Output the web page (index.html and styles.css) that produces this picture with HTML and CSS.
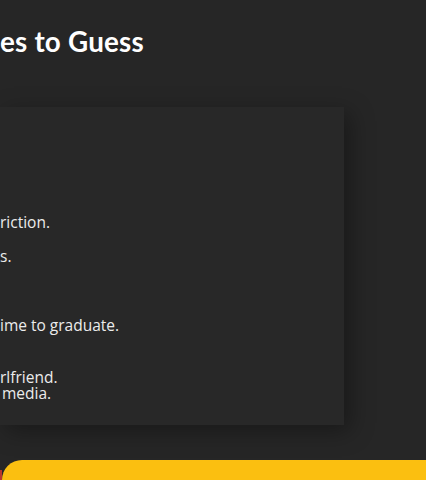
FILE: index.html
```html
<!DOCTYPE html>
<html>
<head>
<meta charset="utf-8">
<link rel="stylesheet" href="styles.css">
</head>
<body>
<div class="page">
  <h1 class="title">es to Guess</h1>
  <div class="card">
    <p class="line l1">riction.</p>
    <p class="line l2">s.</p>
    <p class="line l3">ime to graduate.</p>
    <p class="line l4">rlfriend.</p>
    <p class="line l5">media.</p>
  </div>
  <div class="bottom">
    <div class="red"></div>
    <div class="yellow"></div>
  </div>
</div>
</body>
</html>
```
FILE: styles.css
```css
html, body {
  margin: 0;
  padding: 0;
  background: #262626;
  overflow: hidden;
}
.page {
  width: 426px;
  height: 480px;
  display: flex;
  flex-direction: column;
  overflow: hidden;
}
.title {
  margin: 26px 0 0 0;
  font-family: "Lato", sans-serif;
  font-weight: 700;
  font-size: 27.8px;
  line-height: 32px;
  color: #ffffff;
  letter-spacing: 0.2px;
}
.card {
  margin-top: 49px;
  width: 344px;
  height: 318px;
  box-sizing: border-box;
  background: #282828;
  box-shadow: 6px 6px 22px rgba(0, 0, 0, 0.35);
  display: flex;
  flex-direction: column;
  padding-top: 107px;
}
.line {
  margin: 0;
  font-family: "Open Sans", sans-serif;
  font-size: 15.5px;
  line-height: 16px;
  color: #ececec;
}
.l2 { margin-top: 18px; }
.l3 { margin-top: 53px; }
.l4 { margin-top: 36px; }
.l5 { padding-left: 2px; }
.bottom {
  margin-top: 35px;
  display: flex;
  flex: 1;
}
.red {
  width: 2px;
  margin-top: 10px;
  background: #b7372c;
}
.yellow {
  flex: 1;
  background: #fbbf10;
  border-top-left-radius: 32px;
}
```
